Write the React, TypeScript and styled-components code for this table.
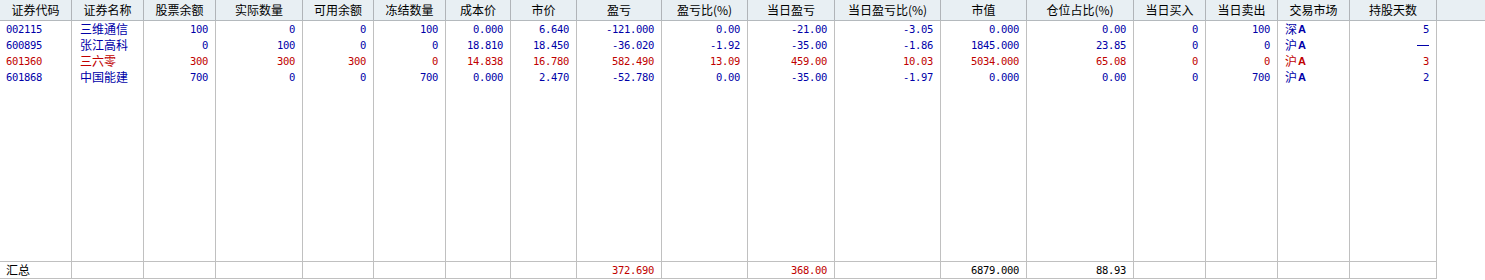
import React from "react";
import styled, { createGlobalStyle } from "styled-components";

const Global = createGlobalStyle`
  html, body { margin: 0; padding: 0; background: #ffffff; }
  body { width: 1485px; height: 280px; overflow: hidden; }
`;

const WIDTHS = [72, 72, 72, 87, 71, 72, 65, 66, 85, 86, 87, 106, 86, 107, 72, 72, 72, 87];

const HEADERS = [
  "证券代码", "证券名称", "股票余额", "实际数量", "可用余额", "冻结数量", "成本价", "市价",
  "盈亏", "盈亏比(%)", "当日盈亏", "当日盈亏比(%)", "市值", "仓位占比(%)", "当日买入", "当日卖出",
  "交易市场", "持股天数",
];

type Tone = "blue" | "red" | "black";

interface Row {
  code: string;
  name: string;
  tone: Tone;
  vals: string[];
  market: string;
  days: string;
}

const ROWS: Row[] = [
  { code: "002115", name: "三维通信", tone: "blue", vals: ["100", "0", "0", "100", "0.000", "6.640", "-121.000", "0.00", "-21.00", "-3.05", "0.000", "0.00", "0", "100"], market: "深", days: "5" },
  { code: "600895", name: "张江高科", tone: "blue", vals: ["0", "100", "0", "0", "18.810", "18.450", "-36.020", "-1.92", "-35.00", "-1.86", "1845.000", "23.85", "0", "0"], market: "沪", days: "—" },
  { code: "601360", name: "三六零", tone: "red", vals: ["300", "300", "300", "0", "14.838", "16.780", "582.490", "13.09", "459.00", "10.03", "5034.000", "65.08", "0", "0"], market: "沪", days: "3" },
  { code: "601868", name: "中国能建", tone: "blue", vals: ["700", "0", "0", "700", "0.000", "2.470", "-52.780", "0.00", "-35.00", "-1.97", "0.000", "0.00", "0", "700"], market: "沪", days: "2" },
];

const SUMMARY: { idx: number; text: string; tone: Tone }[] = [
  { idx: 8, text: "372.690", tone: "red" },
  { idx: 10, text: "368.00", tone: "red" },
  { idx: 12, text: "6879.000", tone: "black" },
  { idx: 13, text: "88.93", tone: "black" },
];

const COLORS: Record<Tone, string> = {
  blue: "#0000a8",
  red: "#c00000",
  black: "#000000",
};

const Grid = styled.div`
  width: 1485px;
  height: 279px;
  display: flex;
  flex-direction: column;
  background: #ffffff;
`;

const HeaderRow = styled.div`
  display: flex;
  height: 21px;
  flex: none;
  background: #e8eff3;
  border-bottom: 1px solid #b4b9bd;
  box-sizing: border-box;
`;

const HeaderCell = styled.div<{ $w: number }>`
  width: ${(p) => p.$w}px;
  flex: none;
  box-sizing: border-box;
  border-right: 1px solid #b0b4b8;
  font-family: "Noto Sans CJK SC", sans-serif;
  font-size: 12px;
  line-height: 20px;
  color: #000;
  text-align: center;
  white-space: nowrap;
  overflow: hidden;
`;

const Body = styled.div`
  flex: 1;
  display: flex;
  flex-direction: column;
`;

const DataRow = styled.div`
  display: flex;
  height: 16px;
  flex: none;
`;

const FillRow = styled.div`
  display: flex;
  flex: 1;
`;

const SummaryRow = styled.div`
  display: flex;
  height: 18px;
  flex: none;
`;

const Cell = styled.div<{ $w: number; $align?: "left" | "right"; $tone?: Tone; $summary?: boolean }>`
  width: ${(p) => p.$w}px;
  flex: none;
  box-sizing: border-box;
  display: flex;
  align-items: center;
  justify-content: ${(p) => (p.$align === "right" ? "flex-end" : "flex-start")};
  border-right: 1px solid #c0c0c0;
  border-top: ${(p) => (p.$summary ? "1px solid #c0c0c0" : "none")};
  border-bottom: ${(p) => (p.$summary ? "1px solid #c0c0c0" : "none")};
  padding: ${(p) => (p.$align === "right" ? "0 7px 0 0" : "0 0 0 6px")};
  color: ${(p) => COLORS[p.$tone ?? "black"]};
  font-family: "DejaVu Sans Mono", monospace;
  font-size: 10.5px;
  letter-spacing: -0.32px;
  line-height: 16px;
  white-space: nowrap;
  overflow: hidden;
`;

const CjkText = styled.span<{ $pad?: number }>`
  font-family: "Noto Sans CJK SC", sans-serif;
  font-size: 12px;
  letter-spacing: 0;
  line-height: 16px;
  padding-left: ${(p) => p.$pad ?? 0}px;
`;

const MarketA = styled.span`
  font-family: "Liberation Sans", sans-serif;
  font-weight: bold;
  font-size: 11px;
  letter-spacing: 0;
  line-height: 16px;
  padding-left: 1px;
`;

const Dash = styled.span`
  display: inline-block;
  width: 12px;
  height: 1px;
  background: currentColor;
`;

const Spacer = styled.div`
  flex: 1;
`;

export default function App() {
  return (
    <>
      <Global />
      <Grid>
        <HeaderRow>
          {HEADERS.map((h, i) => (
            <HeaderCell key={h} $w={WIDTHS[i]}>
              {h}
            </HeaderCell>
          ))}
          <Spacer />
        </HeaderRow>
        <Body>
          {ROWS.map((r) => (
            <DataRow key={r.code}>
              <Cell $w={WIDTHS[0]} $tone={r.tone}>
                {r.code}
              </Cell>
              <Cell $w={WIDTHS[1]} $tone={r.tone}>
                <CjkText $pad={2}>{r.name}</CjkText>
              </Cell>
              {r.vals.map((v, i) => (
                <Cell key={i} $w={WIDTHS[i + 2]} $align="right" $tone={r.tone}>
                  {v}
                </Cell>
              ))}
              <Cell $w={WIDTHS[16]} $tone={r.tone}>
                <CjkText $pad={1}>{r.market}</CjkText>
                <MarketA>A</MarketA>
              </Cell>
              <Cell $w={WIDTHS[17]} $align="right" $tone={r.tone}>
                {r.days === "—" ? <Dash /> : r.days}
              </Cell>
            </DataRow>
          ))}
          <FillRow>
            {WIDTHS.map((w, i) => (
              <Cell key={i} $w={w} />
            ))}
          </FillRow>
        </Body>
        <SummaryRow>
          {WIDTHS.map((w, i) => {
            if (i === 0) {
              return (
                <Cell key={i} $w={w} $summary>
                  <CjkText>汇总</CjkText>
                </Cell>
              );
            }
            const s = SUMMARY.find((x) => x.idx === i);
            return (
              <Cell key={i} $w={w} $summary $align="right" $tone={s?.tone}>
                {s?.text ?? ""}
              </Cell>
            );
          })}
        </SummaryRow>
      </Grid>
    </>
  );
}
